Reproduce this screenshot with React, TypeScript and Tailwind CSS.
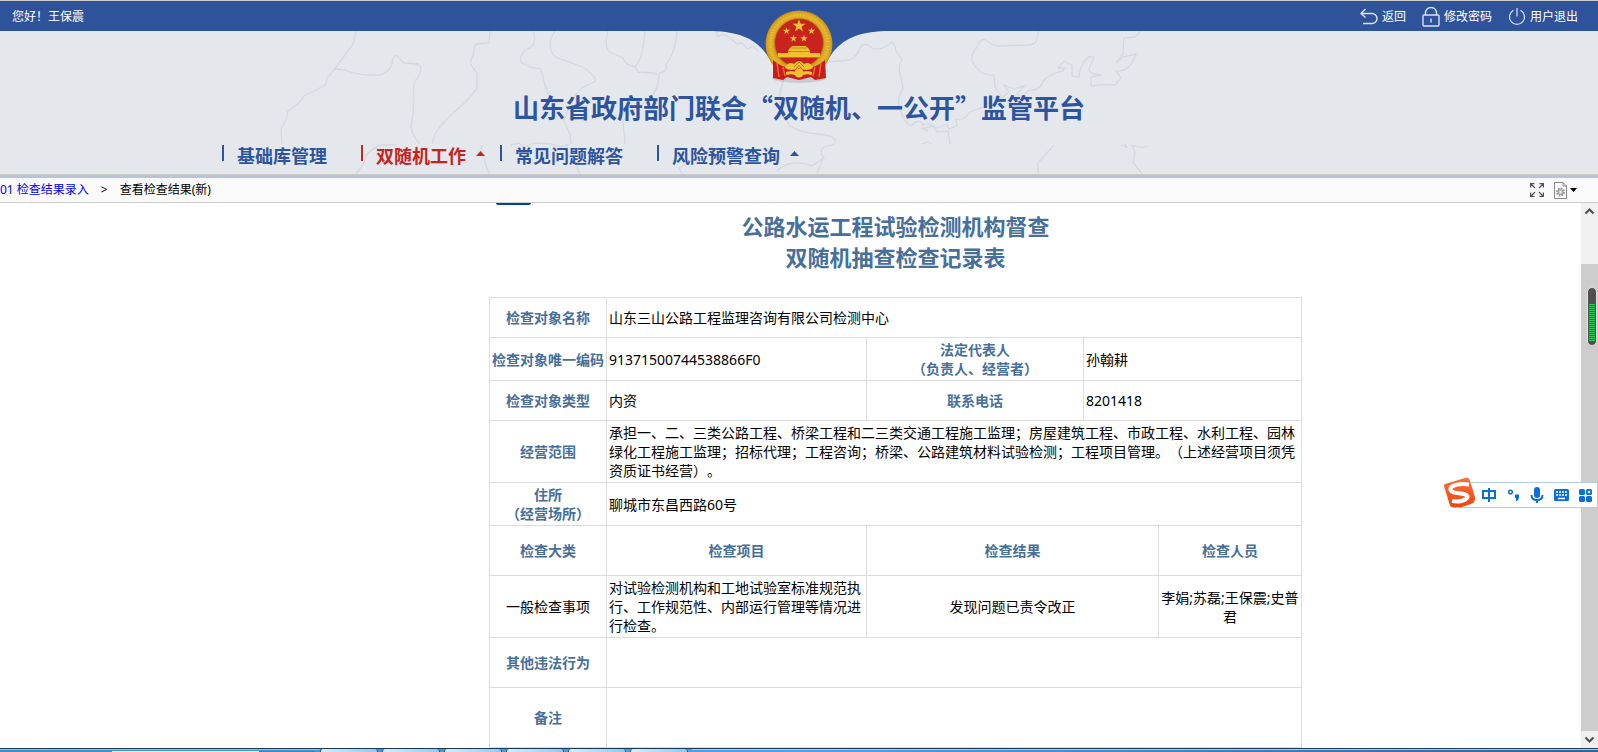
import React from 'react';

const navItems = [
    { label: '基础库管理', active: false, caret: false },
    { label: '双随机工作', active: true, caret: true },
    { label: '常见问题解答', active: false, caret: false },
    { label: '风险预警查询', active: false, caret: true },
];

// Faint province outlines behind the header
const mapLines = [
    'M356 31 L353 44 L334 70 L327 78 L326 84 L318 89 L304 96 L298 104 L288 111 L286 120 L281 129 L282 144',
    'M334 69 L345 70 Q358 75 370 75 L381 75 Q390 71 392 64 Q393 54 397 56 L404 63 L418 64 Q423 68 419 76 Q412 82 414 96 L413 114 L411 128 Q413 137 420 144',
    'M490 31 L489 43 L476 44 Q473 48 474 54 Q468 62 473 68 L477 73 L477 88 Q472 97 460 107 Q443 121 435 134 L432 144',
    'M533 31 Q538 46 527 49 Q517 57 522 63 Q535 70 540 68 Q543 75 545 85 Q552 107 564 121 L570 134 L571 144',
    'M555 31 Q545 45 555 57 L583 67 Q600 80 594 82 Q575 89 572 103 L563 121',
    'M608 31 Q603 50 612 53 L623 58 Q625 65 635 67 Q641 60 643 48 L645 31',
    'M635 67 L638 72 L654 73 L659 75 Q659 88 650 99 Q630 112 623 121 L625 144',
    'M659 73 Q668 72 666 64 Q672 57 675 45 L677 31',
    'M716 31 L718 37 Q724 32 730 38 L737 44 L742 43 L748 49 L753 46 L758 51',
    'M784 80 Q776 96 783 110 L789 125 Q800 133 818 134 Q840 136 834 145',
    'M827 62 L850 60 Q858 56 860 47 Q865 41 872 48 Q880 52 892 42 Q895 44 896 51 L902 59 Q897 68 901 78 L903 89 Q896 98 900 110 Q905 124 911 126 Q920 117 923 125 Q926 121 937 128',
    'M1038 31 Q1039 45 1028 45 L997 46 Q988 43 986 40 Q980 38 977 47 Q967 59 976 67 Q982 76 994 75 L995 87 L1001 96',
    'M937 128 L947 124 L949 129 L957 126 L956 119 Q964 121 970 112 L986 106 L992 98 L1003 97 L1009 92 L1004 85 L1014 89 L1024 86 L1017 94 L1022 97 L1029 90 Q1041 91 1043 81 Q1051 73 1063 71 L1065 68 L1058 68 L1064 61 L1072 65 L1072 76 L1079 77 Q1080 65 1088 57 L1094 57 L1089 69 Q1089 74 1101 75 L1091 77 L1091 86 Q1106 84 1115 85 L1121 78 L1116 71 Q1130 72 1136 54 L1123 57 L1116 63 L1123 53 L1124 38 L1135 37 L1141 31',
    'M921 128 L928 131 L924 128 L933 126 L937 132 L948 131 L950 144 M922 144 L928 142 L932 144',
    'M356 174 Q366 162 366 155 Q374 147 382 145 L396 145 M483 145 Q479 150 484 158 Q487 171 490 174',
    'M511 145 L519 143 L524 147 L534 143 L552 144 Q560 149 569 144 M569 144 Q560 151 573 158 L580 174',
    'M682 174 L679 168 L691 161 L704 154 L714 145 M777 171 Q790 158 812 166 L824 158 Q815 146 834 145 M817 174 L823 158',
    'M1054 145 L1038 163 L1038 174 M1121 145 L1127 147 L1125 144 M1132 145 Q1142 149 1148 146 M1132 145 L1135 152 L1133 162 L1142 174',
];

const star = 'M0 -5 L1.2 -1.6 L4.8 -1.6 L1.9 .6 L3 4 L0 1.9 L-3 4 L-1.9 .6 L-4.8 -1.6 L-1.2 -1.6Z';

const Emblem: React.FC = () => (
    <svg width="172" height="86" viewBox="713 1 172 86" className="absolute top-0 left-1/2 -translate-x-1/2" aria-hidden="true">
        <defs>
            <linearGradient id="swoosh" x1="0" y1="0" x2="0" y2="1">
                <stop offset="0" stopColor="#2f539b" />
                <stop offset="1" stopColor="#2f62af" />
            </linearGradient>
            <radialGradient id="gold">
                <stop offset=".7" stopColor="#c98f10" />
                <stop offset=".86" stopColor="#efc63a" />
                <stop offset="1" stopColor="#c38a12" />
            </radialGradient>
        </defs>
        <path d="M713 31 C740 32 756 39 767 55 C776 70 786 74 799 74 C812 74 822 70 831 55 C842 39 858 32 885 31Z" fill="url(#swoosh)" />
        <ellipse cx="799" cy="78" rx="27" ry="5" fill="#000" opacity=".12" />
        <circle cx="799" cy="44" r="33.5" fill="url(#gold)" />
        <circle cx="799" cy="44" r="29.5" fill="none" stroke="#dca521" strokeWidth="6" strokeDasharray="2 1" opacity=".7" />
        <path d="M773 60 Q786 71 799 67 Q812 71 825 60 L826 78 L815 80 L811 77 L799 80 L787 77 L783 80 L773 78Z" fill="#c81d1a" />
        <path d="M777 63 L779 77 M783 67 L785 76 M821 63 L819 77 M815 67 L813 76" stroke="#ee6733" strokeWidth="1.5" />
        <circle cx="799" cy="43" r="24.5" fill="#c8231f" stroke="#b98412" />
        <g fill="#f1c22e">
            <path d={star} transform="translate(799 26) scale(1.35)" />
            <path d={star} transform="translate(786.5 31) scale(.75)" />
            <path d={star} transform="translate(811.5 31) scale(.75)" />
            <path d={star} transform="translate(793.5 38.5) scale(.75)" />
            <path d={star} transform="translate(804 38.5) scale(.75)" />
            <path d="M788 51 L790 47.500 H791 L792 46 H806 L807 47.500 H808 L810 51 V53 H820 V57.500 H778 V53 H788Z" />
            <path d="M785 68 Q788 61 794 64 Q799 58 804 64 Q810 61 813 68 Q807 72 799 68 Q791 72 785 68Z" />
            <circle cx="799" cy="73" r="4.500" />
            <path d="M786 72 Q794 69 799 74 Q804 69 812 72 L812 75 Q804 73 799 77 Q794 73 786 75Z" />
        </g>
        <path d="M788 51.500 H810 M778 57.500 H820 M791 48 H807" stroke="#b9791a" strokeWidth=".8" />
        <path d="M794 67 L799 62 L804 67 M796 69 L799 65 L802 69" fill="none" stroke="#b9791a" />
    </svg>
);

const BackIcon: React.FC = () => (
    <svg width="18" height="18" viewBox="0 0 18 18" fill="none" stroke="#d9e2f2" strokeWidth="1.4" aria-hidden="true">
        <path d="M5.500 1 L1 5.500 L5.500 9.500 M1.500 5.500 H12 A5 5 0 0 1 12 15.500 H3" />
    </svg>
);

const LockIcon: React.FC = () => (
    <svg width="18" height="20" viewBox="0 0 18 20" fill="none" stroke="#d9e2f2" strokeWidth="1.4" aria-hidden="true">
        <rect x="1" y="8" width="16" height="11" rx="1" />
        <path d="M3.500 8 V6 A5.500 5.500 0 0 1 14.500 6 V8 M9 11.500 V15.500" />
    </svg>
);

const PowerIcon: React.FC = () => (
    <svg width="18" height="18" viewBox="0 0 18 18" fill="none" stroke="#d9e2f2" strokeWidth="1.2" aria-hidden="true">
        <path d="M9 0 V8.500 M5.500 2.300 A7.500 7.500 0 1 0 12.500 2.300" />
    </svg>
);

const ExpandIcon: React.FC = () => (
    <svg width="14" height="14" viewBox="0 0 14 14" fill="none" stroke="#555" strokeWidth="1.2" aria-hidden="true">
        <path d="M.6 4.500 V.6 H4.500 M9.500 .6 H13.400 V4.500 M13.400 9.500 V13.400 H9.500 M4.500 13.400 H.6 V9.500 M1 1 L5 5 M13 1 L9 5 M13 13 L9 9 M1 13 L5 9" />
    </svg>
);

const PageIcon: React.FC = () => (
    <svg width="24" height="17" viewBox="0 0 24 17" fill="none" aria-hidden="true">
        <path d="M.5 .5 H9 L12.500 4 V16.500 H.5Z" fill="#fff" stroke="#888" />
        <path d="M9 .5 V4 H12.500" stroke="#888" />
        <circle cx="6.500" cy="10" r="3.500" stroke="#999" strokeWidth="2" strokeDasharray="1.800 .9" />
        <circle cx="6.500" cy="10" r="2.600" fill="#ccc" stroke="#999" />
        <circle cx="6.500" cy="10" r="1" fill="#fff" />
        <path d="M16 6 H23 L19.500 10Z" fill="#000" />
    </svg>
);

const Th: React.FC<React.ThHTMLAttributes<HTMLTableCellElement>> = ({ children, ...rest }) => (
    <th {...rest} className="border border-[#dcdcdc] p-0.5 font-bold text-[#476f9b] text-center">
        {children}
    </th>
);

const Td: React.FC<React.TdHTMLAttributes<HTMLTableCellElement>> = ({ children, ...rest }) => (
    <td {...rest} className="border border-[#dcdcdc] p-0.5">
        {children}
    </td>
);

const RecordTable: React.FC = () => (
    <table className="w-[813px] table-fixed border-collapse text-sm leading-[19px] text-black">
        <colgroup>
            <col className="w-[117px]" />
            <col className="w-[260px]" />
            <col className="w-[217px]" />
            <col className="w-[75px]" />
            <col className="w-[143px]" />
        </colgroup>
        <tbody>
            <tr className="h-10">
                <Th>检查对象名称</Th>
                <Td colSpan={4}>山东三山公路工程监理咨询有限公司检测中心</Td>
            </tr>
            <tr>
                <Th>
                    <span className="whitespace-nowrap">检查对象唯一编码</span>
                </Th>
                <Td>91371500744538866F0</Td>
                <Th>
                    法定代表人
                    <br />
                    （负责人、经营者）
                </Th>
                <Td colSpan={2}>孙翰耕</Td>
            </tr>
            <tr className="h-10">
                <Th>检查对象类型</Th>
                <Td>内资</Td>
                <Th>联系电话</Th>
                <Td colSpan={2}>8201418</Td>
            </tr>
            <tr>
                <Th>经营范围</Th>
                <Td colSpan={4}>
                    承担一、二、三类公路工程、桥梁工程和二三类交通工程施工监理；房屋建筑工程、市政工程、水利工程、园林绿化工程施工监理；招标代理；工程咨询；桥梁、公路建筑材料试验检测；工程项目管理。（上述经营项目须凭资质证书经营）。
                </Td>
            </tr>
            <tr>
                <Th>
                    住所
                    <br />
                    （经营场所）
                </Th>
                <Td colSpan={4}>聊城市东昌西路60号</Td>
            </tr>
            <tr className="h-[50px]">
                <Th>检查大类</Th>
                <Th>检查项目</Th>
                <Th colSpan={2}>检查结果</Th>
                <Th>检查人员</Th>
            </tr>
            <tr className="text-center">
                <Td>一般检查事项</Td>
                <Td align="left">对试验检测机构和工地试验室标准规范执行、工作规范性、内部运行管理等情况进行检查。</Td>
                <Td colSpan={2}>发现问题已责令改正</Td>
                <Td>李娟;苏磊;王保震;史普君</Td>
            </tr>
            <tr className="h-[50px]">
                <Th>其他违法行为</Th>
                <Td colSpan={4} />
            </tr>
            <tr className="h-[60px]">
                <Th>备注</Th>
                <Td colSpan={4} />
            </tr>
        </tbody>
    </table>
);

const ScrollArrow: React.FC<{ d: string }> = ({ d }) => (
    <svg width="17" height="17" viewBox="0 0 17 17" fill="none" stroke="#505050" strokeWidth="2.200" aria-hidden="true">
        <path d={d} />
    </svg>
);

// Floating input method bar
const ImeBar: React.FC = () => (
    <svg width="154" height="32" viewBox="0 0 154 32" className="absolute right-0 top-[274px]" aria-hidden="true">
        <defs>
            <linearGradient id="ime" x1="0" y1="0" x2="0" y2="1">
                <stop offset="0" stopColor="#fb7138" />
                <stop offset="1" stopColor="#ee4410" />
            </linearGradient>
        </defs>
        <path d="M14 5.500 H153.500 V30.500 H14Z" fill="#fff" stroke="#b3cbe6" />
        <path d="M1 7 L21 1 Q25 0 26 4 L31 20 Q32 25 27 27 Q18 31 9 30.500 Q6 30 5.500 27 L0 9 Q0 7 1 7Z" fill="url(#ime)" />
        <path d="M25 7.500 Q14 6 8 9.500 Q4 13 10 15.500 L20 17 Q26 19 22 22 Q17 25.500 8 24" fill="none" stroke="#fff" strokeWidth="4" />
        <g fill="none" stroke="#0a6fd8" strokeWidth="2">
            <path d="M39 14 H51 V21 H39Z M45 11 V25" />
            <circle cx="66.500" cy="15" r="1.800" strokeWidth="1.500" />
            <path d="M87.500 18 Q87.500 23 93 23 Q98.500 23 98.500 18 M93 23 V26" />
        </g>
        <g fill="#0a6fd8">
            <path d="M71 17.500 H75 V21 Q74.500 23.500 72 24.500 V21 H71Z" />
            <rect x="90" y="10" width="6" height="11" rx="3" />
            <rect x="110" y="12" width="15" height="12" rx="1.500" />
            <rect x="135" y="12" width="6" height="6" rx="1.500" />
            <rect x="142" y="12" width="6" height="6" rx="1.500" />
            <rect x="135" y="19" width="6" height="6" rx="1.500" />
            <rect x="142" y="19" width="6" height="6" rx="1.500" />
        </g>
        <path d="M112 15 H123.500 M112 18 H123.500" stroke="#fff" strokeWidth="1.600" strokeDasharray="2 1" />
        <path d="M114 21.500 H121" stroke="#fff" strokeWidth="1.500" />
        <circle cx="145" cy="15" r="1.300" fill="#fff" />
    </svg>
);

const VolumeGauge: React.FC = () => (
    <div className="absolute right-px top-[84px] h-[59px] w-[10px] rounded-full border border-[#e2e2e2] bg-[#505050] px-px pt-4 pb-1">
        <div className="h-full bg-[repeating-linear-gradient(to_bottom,#2ecc5b_0px,#2ecc5b_1px,#4a5a4c_1px,#4a5a4c_2px)]" />
    </div>
);

const Taskbar: React.FC = () => (
    <footer className="h-1 shrink-0 overflow-hidden border-t border-[#1c3a55] flex bg-linear-to-r from-[#3f8fc4] via-[#4da3ec] to-[#2f6299]">
        <div className="w-[320px] shrink-0 border-t border-[#8fc4e4] pt-px flex">
            <div className="ml-[112px] w-[147px] bg-[#f3f8fc]" />
            <div className="w-14 bg-[#2f86e6]" />
        </div>
        {[0, 1, 2, 3, 4, 5].map((tab) => (
            <div key={tab} className="mr-1 w-[58px] shrink-0 rounded-t-sm border-x border-[#2c5878] bg-linear-to-r from-[#d9ecf8] to-[#8fc9f2]" />
        ))}
        <div className="flex-1 border-t border-[#9fd0f5]" />
    </footer>
);

const App: React.FC = () => {
    return (
        <div
            lang="zh-CN"
            className="h-screen flex flex-col overflow-hidden bg-white font-['Noto_Sans','Noto_Sans_CJK_SC',sans-serif] [text-spacing-trim:space-all]"
        >
            {/* Header */}
            <header className="relative shrink-0 overflow-hidden border-t border-b border-[#ccc] bg-[#e4e8ec]">
                <svg width="1598" height="173" viewBox="0 1 1598 173" className="absolute top-0 left-1/2 -translate-x-1/2" fill="none" stroke="#d6d8df" strokeWidth="1.300" aria-hidden="true">
                    {mapLines.map((d) => (
                        <path key={d} d={d} />
                    ))}
                </svg>
                <div className="relative h-[30px] px-3 pr-5 pt-0.5 flex items-center justify-between bg-[#2f539b] text-xs text-white">
                    <span>您好！王保震</span>
                    <div className="flex items-center gap-4">
                        <a href="#back" className="flex items-center gap-1">
                            <BackIcon />
                            返回
                        </a>
                        <a href="#password" className="flex items-center gap-1">
                            <LockIcon />
                            修改密码
                        </a>
                        <a href="#logout" className="flex items-center gap-1">
                            <PowerIcon />
                            用户退出
                        </a>
                    </div>
                </div>
                <Emblem />
                <h1 className="relative mt-14 text-center text-[26px] leading-10 font-bold text-[#2c54a0] font-['Noto_Sans_CJK_SC',sans-serif]">
                    山东省政府部门联合“双随机、一公开”监管平台
                </h1>
                <nav className="relative mt-[18px] h-[29px] pl-[222px] flex items-start font-['Noto_Sans_CJK_SC',sans-serif]">
                    {navItems.map((item) => (
                        <a
                            key={item.label}
                            href="#nav"
                            className={`relative h-4 border-l-2 pt-1 pl-[13px] pr-[34px] flex items-center whitespace-nowrap text-lg font-bold ${
                                item.active ? 'border-[#c8231f] text-[#c8231f]' : 'border-[#2c54a0] text-[#2c54a0]'
                            }`}
                        >
                            {item.label}
                            {item.caret && (
                                <svg width="9" height="5" viewBox="0 0 9 5" className="absolute right-[15px] top-1.5" fill="currentColor" aria-hidden="true">
                                    <path d="M4.500 0 L9 5 H0Z" />
                                </svg>
                            )}
                        </a>
                    ))}
                </nav>
            </header>

            {/* Breadcrumb */}
            <div className="shrink-0 h-7 border-t-3 border-b border-t-[#b9c3d6] border-b-[#ccc] bg-[#fafafa] pr-5 flex items-center justify-between text-xs text-black">
                <div className="flex items-center whitespace-nowrap">
                    <a href="#entry" className="text-[#0000ff]">
                        01 检查结果录入
                    </a>
                    <span className="mx-3">&gt;</span>
                    <span>查看检查结果(新)</span>
                </div>
                <div className="flex items-center gap-2.5">
                    <button type="button" aria-label="全屏">
                        <ExpandIcon />
                    </button>
                    <button type="button" aria-label="页面设置">
                        <PageIcon />
                    </button>
                </div>
            </div>

            {/* Content */}
            <div className="relative flex-1 min-h-0 flex">
                <main className="flex-1 min-w-0 overflow-hidden pl-[210px]">
                    <div className="mx-auto w-[813px]">
                        <div className="ml-[7px] h-0.5 w-[35px] rounded-b-sm bg-[#00478f]" />
                        <h2 className="mt-1.5 mb-6 text-center text-[22px] leading-[31px] font-bold text-[#476f9b]">
                            公路水运工程试验检测机构督查
                            <br />
                            双随机抽查检查记录表
                        </h2>
                        <RecordTable />
                    </div>
                </main>
                <div className="w-[17px] shrink-0 flex flex-col bg-[#f0f0f0]">
                    <ScrollArrow d="M4.500 10.500 L8.500 6.500 L12.500 10.500" />
                    <div className="mt-11 flex-1 bg-[#cdcdcd]" />
                    <ScrollArrow d="M4.500 6.500 L8.500 10.500 L12.500 6.500" />
                </div>
                <VolumeGauge />
                <ImeBar />
            </div>

            <Taskbar />
        </div>
    );
};

export default App;
